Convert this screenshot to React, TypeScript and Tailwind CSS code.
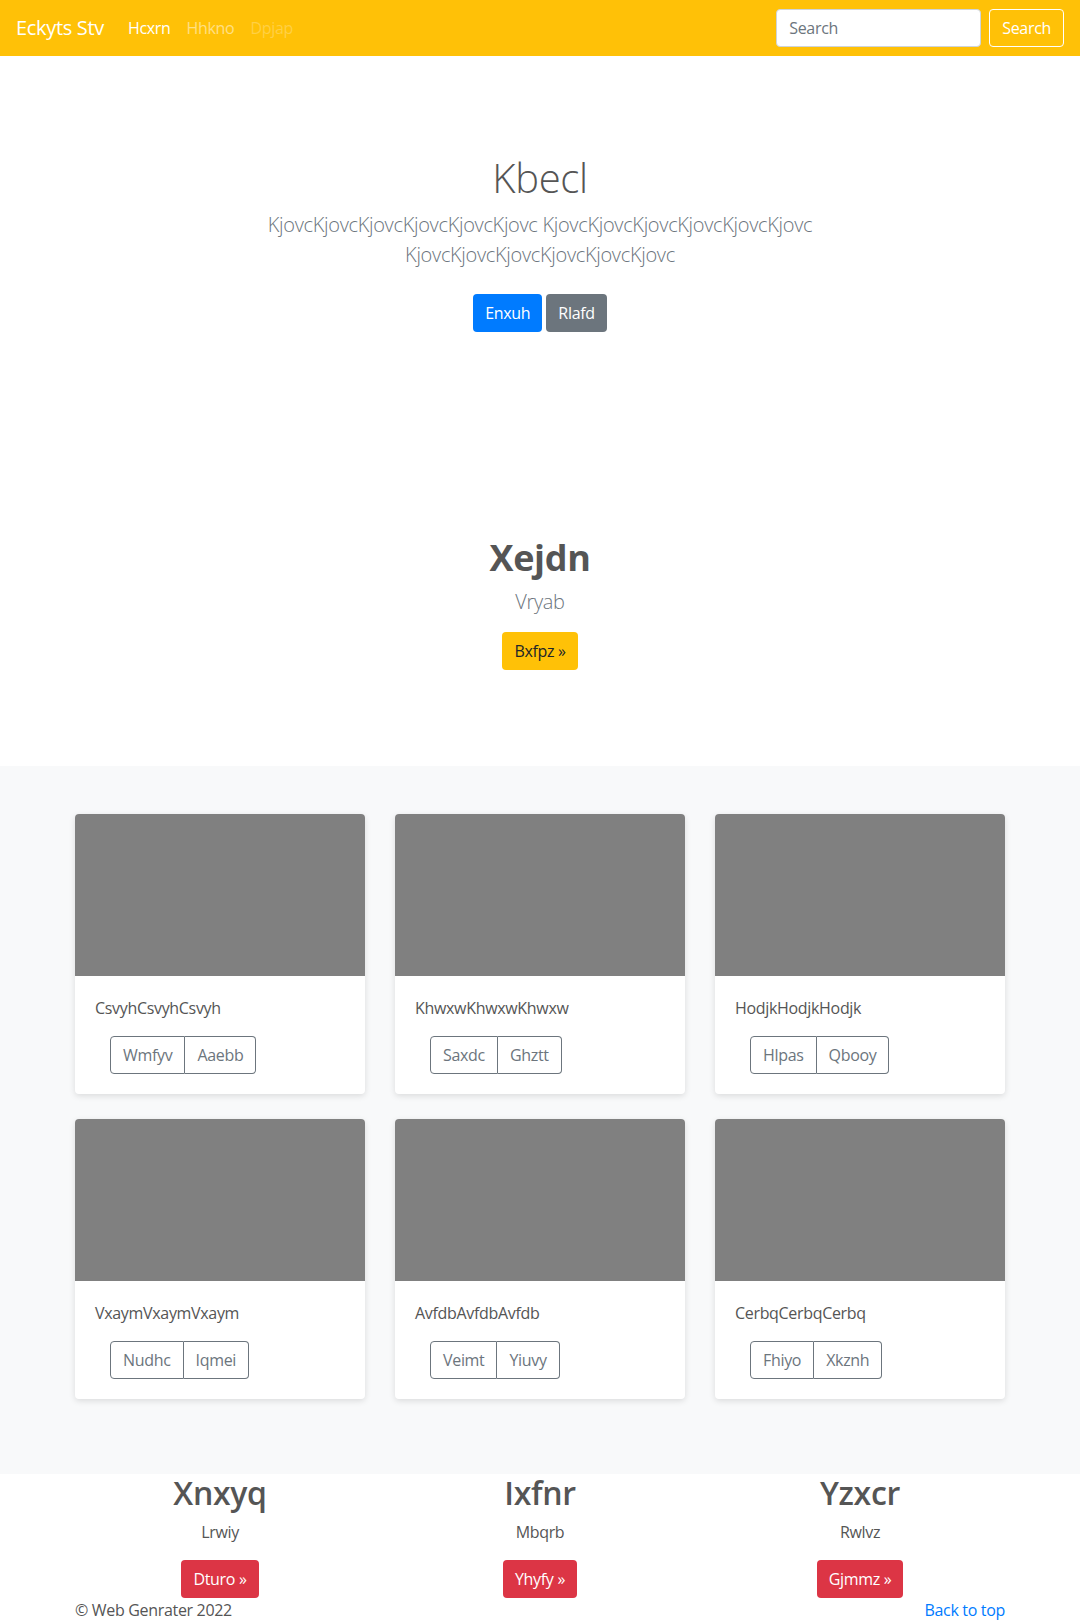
import { FC } from "react";

const cards = [
  { title: "CsvyhCsvyhCsvyh", a: "Wmfyv", b: "Aaebb" },
  { title: "KhwxwKhwxwKhwxw", a: "Saxdc", b: "Ghztt" },
  { title: "HodjkHodjkHodjk", a: "Hlpas", b: "Qbooy" },
  { title: "VxaymVxaymVxaym", a: "Nudhc", b: "Iqmei" },
  { title: "AvfdbAvfdbAvfdb", a: "Veimt", b: "Yiuvy" },
  { title: "CerbqCerbqCerbq", a: "Fhiyo", b: "Xkznh" },
];

const features = [
  { title: "Xnxyq", text: "Lrwiy", btn: "Dturo" },
  { title: "Ixfnr", text: "Mbqrb", btn: "Yhyfy" },
  { title: "Yzxcr", text: "Rwlvz", btn: "Gjmmz" },
];

const Card: FC<{ title: string; a: string; b: string }> = ({ title, a, b }) => (
  <div className="bg-white rounded shadow-[0_2px_6px_rgba(0,0,0,0.12)] overflow-hidden">
    <div className="h-[162px] bg-[#808080]" />
    <div className="p-5">
      <p className="text-[#555] leading-6 mb-4">{title}</p>
      <div className="ml-[15px] inline-flex">
        <button className="h-[38px] px-3 border border-[#6c757d] text-[#6c757d] rounded-l">
          {a}
        </button>
        <button className="h-[38px] px-3 border border-l-0 border-[#6c757d] text-[#6c757d] rounded-r">
          {b}
        </button>
      </div>
    </div>
  </div>
);

export default function App() {
  return (
    <div className="font-['Open_Sans','Noto_Sans',sans-serif] tracking-[-0.02em] text-base text-[#555] bg-white">
      {/* navbar */}
      <nav className="h-14 bg-[#ffc107] flex items-center px-4">
        <a className="text-white text-[20px] mr-4">Eckyts Stv</a>
        <a className="px-2 text-white">Hcxrn</a>
        <a className="px-2 text-white/50">Hhkno</a>
        <a className="px-2 text-white/25">Dpjap</a>
        <form className="ml-auto flex items-center gap-2">
          <input
            placeholder="Search"
            className="w-[205px] h-[38px] px-3 bg-white rounded border border-[#ced4da] placeholder:text-[#6c757d] outline-none"
          />
          <button
            type="button"
            className="h-[38px] px-3 rounded border border-white text-white"
          >
            Search
          </button>
        </form>
      </nav>

      {/* hero */}
      <section className="text-center pt-[98px] pb-[102px]">
        <h1 className="text-[40px] font-light leading-[48px] text-[#555] mb-2">
          Kbecl
        </h1>
        <p className="max-w-[610px] mx-auto text-[20px] font-light leading-[30px] text-[#6c757d]">
          KjovcKjovcKjovcKjovcKjovcKjovc KjovcKjovcKjovcKjovcKjovcKjovc
          KjovcKjovcKjovcKjovcKjovcKjovc
        </p>
        <div className="mt-6 flex justify-center gap-1">
          <button className="h-[38px] px-3 rounded bg-[#007bff] text-white">
            Enxuh
          </button>
          <button className="h-[38px] px-3 rounded bg-[#6c757d] text-white">
            Rlafd
          </button>
        </div>
      </section>

      <section className="text-center pt-[102px] pb-[96px]">
        <h1 className="text-[36px] font-bold leading-[43px] text-[#555] mb-2">
          Xejdn
        </h1>
        <p className="text-[20px] font-light leading-[30px] text-[#6c757d]">
          Vryab
        </p>
        <button className="mt-[15px] h-[38px] px-3 rounded bg-[#ffc107] text-[#212529]">
          Bxfpz »
        </button>
      </section>

      {/* album */}
      <section className="bg-[#f8f9fa] pt-12 pb-[75px]">
        <div className="w-[930px] mx-auto grid grid-cols-3 gap-x-[30px] gap-y-[25px]">
          {cards.map((c) => (
            <Card key={c.title} {...c} />
          ))}
        </div>
      </section>

      {/* features */}
      <section className="w-[960px] mx-auto grid grid-cols-3">
        {features.map((f) => (
          <div key={f.title} className="text-center px-[15px]">
            <h2 className="text-[32px] font-semibold leading-[38px] text-[#555] mb-2">
              {f.title}
            </h2>
            <p className="leading-6 text-[#555] mb-4">{f.text}</p>
            <button className="h-[38px] px-3 rounded bg-[#dc3545] text-white">
              {f.btn} »
            </button>
          </div>
        ))}
      </section>

      <footer className="w-[960px] mx-auto px-[15px] flex justify-between leading-6">
        <p className="text-[#555]">© Web Genrater 2022</p>
        <a href="#" className="text-[#007bff]">
          Back to top
        </a>
      </footer>
    </div>
  );
}
